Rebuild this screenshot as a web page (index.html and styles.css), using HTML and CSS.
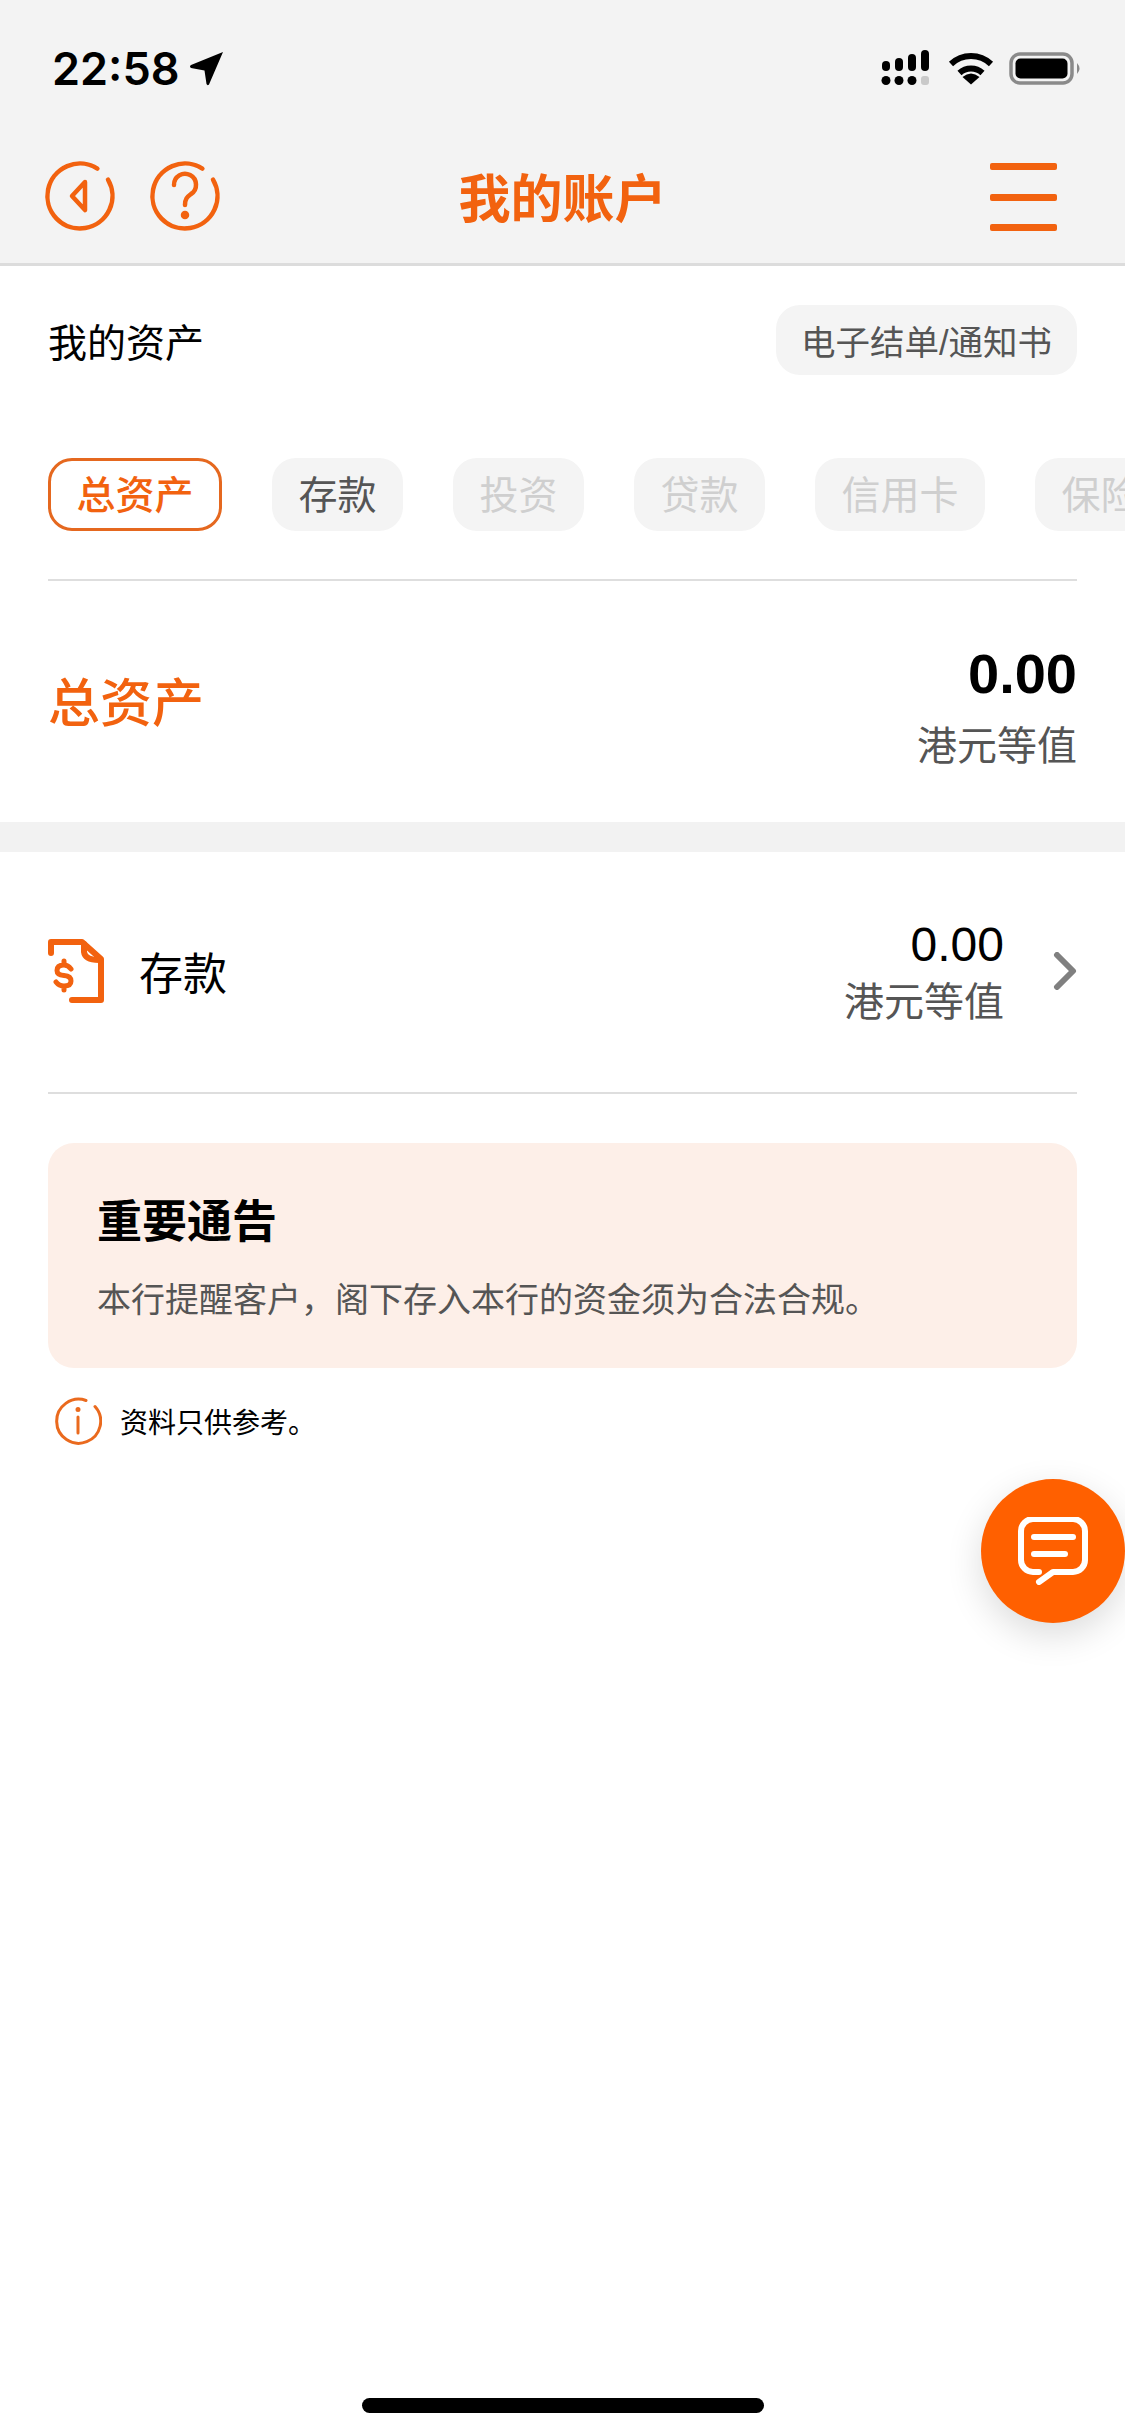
FILE: index.html
```html
<!DOCTYPE html>
<html lang="zh-CN">
<head>
  <meta charset="UTF-8" />
  <meta name="viewport" content="width=device-width, initial-scale=1" />
  <title>我的账户</title>
  <link rel="stylesheet" href="styles.css">
</head>
<body>
  <div class="page">
    <header class="top">
      <div class="status">
        <div class="status-left">
          <span class="time">22:58</span>
          <svg class="loc" viewBox="0 0 36 35"><path d="M34 1L20 33.500Q18.500 35 17.500 33L15.500 19.500L2 17Q0 15.500 2 14Z" /></svg>
        </div>
        <div class="status-right">
          <svg class="signal" viewBox="0 0 50 36">
            <rect x="1" y="11" width="8" height="10" rx="4" />
            <rect x="14" y="8" width="8" height="13" rx="4" />
            <rect x="27" y="4" width="8" height="17" rx="4" />
            <rect x="40" y="0" width="8" height="21" rx="4" />
            <circle cx="5" cy="30.500" r="4.500" />
            <circle cx="18" cy="30.500" r="4.500" />
            <circle cx="31" cy="30.500" r="4.500" />
            <rect class="signal-off" x="40" y="26" width="8" height="9" rx="3" />
          </svg>
          <svg class="wifi" viewBox="0 0 46 34">
            <path class="wifi-arc" d="M3 13A29 29 0 0 1 43 13" />
            <path class="wifi-arc" d="M11.500 22A17 17 0 0 1 34.500 22" />
            <path d="M23 33.500L14.500 26Q23 19 31.500 26Z" />
          </svg>
          <svg class="battery" viewBox="0 0 73 33">
            <rect class="battery-shell" x="2" y="2" width="61" height="29" rx="9" />
            <rect x="6.500" y="6.500" width="52" height="20" rx="5" />
            <path class="battery-nub" d="M68 11Q73 16.500 68 22Z" />
          </svg>
        </div>
      </div>
      <nav class="nav">
        <div class="nav-left">
          <svg class="round-icon" viewBox="0 0 72 72">
            <path d="M64 19.600A32.500 32.500 0 1 1 53.400 8.600" />
            <path d="M41 22L28 36L41 50Z" />
          </svg>
          <svg class="round-icon" viewBox="0 0 72 72">
            <path d="M64 19.600A32.500 32.500 0 1 1 53.400 8.600" />
            <path d="M25 25A11 11 0 1 1 42 34C38 37 36 39 36 45" />
            <circle class="dot" cx="36" cy="55" r="2" />
          </svg>
        </div>
        <h1 class="nav-title">我的账户</h1>
        <div class="burger"><span></span><span></span><span></span></div>
      </nav>
    </header>

    <section class="assets">
      <div class="assets-head">
        <span class="assets-label">我的资产</span>
        <span class="statement-btn">电子结单/通知书</span>
      </div>
      <div class="tabs">
        <span class="tab tab-active">总资产</span>
        <span class="tab">存款</span>
        <span class="tab tab-off">投资</span>
        <span class="tab tab-off">贷款</span>
        <span class="tab tab-off">信用卡</span>
        <span class="tab tab-off">保险</span>
      </div>
      <div class="total">
        <span class="total-label">总资产</span>
        <div class="total-value">
          <div class="total-num">0.00</div>
          <div class="unit">港元等值</div>
        </div>
      </div>
    </section>

    <div class="band"></div>

    <section class="list">
      <div class="row">
        <svg class="doc-icon" viewBox="0 0 58 66">
          <path d="M3 15V4H34L53 21V62H24" />
          <path d="M36 6V14Q37 22 51 22" />
          <path class="doc-dollar" d="M23 31Q20 27 16 27Q9 27 9 32.500Q9 37 16 37.500Q23 38 23 43Q23 48 16 48Q11 48 8 44M16 23V27M16 48V52" />
        </svg>
        <span class="row-label">存款</span>
        <div class="row-value">
          <div class="row-num">0.00</div>
          <div class="unit">港元等值</div>
        </div>
        <svg class="chevron" viewBox="0 0 24 38"><path d="M4 3L20 19L4 35" /></svg>
      </div>

      <div class="notice">
        <h2 class="notice-title">重要通告</h2>
        <p class="notice-text">本行提醒客户，阁下存入本行的资金须为合法合规。</p>
      </div>

      <div class="info">
        <svg class="info-icon" viewBox="0 0 48 48">
          <path d="M41 9.500A22 22 0 1 1 32 3.500" />
          <path d="M24 20V36" />
          <circle class="dot" cx="24" cy="12.500" r="1" />
        </svg>
        <span>资料只供参考。</span>
      </div>
    </section>

    <div class="fab">
      <svg class="fab-icon" viewBox="0 0 70 68">
        <path d="M21 55H15A12 12 0 0 1 3 43V14A12 12 0 0 1 15 2H55A12 12 0 0 1 67 14V43A12 12 0 0 1 55 55H35L21 65" />
        <path d="M16 20H55" />
        <path d="M16 37H47" />
      </svg>
    </div>

    <div class="home-bar"></div>
  </div>
</body>
</html>
```

FILE: styles.css
```css
* {
  box-sizing: border-box;
}
html, body {
  margin: 0;
  padding: 0;
  background-color: #fff;
}
body {
  font-family: "Liberation Sans", "Noto Sans CJK SC", sans-serif;
  color: #000;
}
.page {
  position: relative;
  width: 1125px;
  height: 2436px;
  display: flex;
  flex-direction: column;
  overflow: hidden;
}

/* top */
.top {
  background-color: #f3f3f3;
  border-bottom: 3px solid #dcdcdc;
}
.status {
  height: 133px;
  padding: 3px 43px 0 52px;
  display: flex;
  justify-content: space-between;
  align-items: center;
}
.status-left,
.status-right {
  display: flex;
  align-items: center;
}
.time {
  font-size: 45px;
  font-weight: 600;
  font-family: Inter, "Liberation Sans", sans-serif;
}
.loc {
  width: 36px;
  height: 35px;
  margin-left: 9px;
}
.signal {
  width: 50px;
  height: 36px;
  margin-right: 1px;
}
.signal-off {
  fill: #c9c9c9;
}
.wifi {
  width: 46px;
  height: 34px;
  margin-left: 16px;
}
.wifi-arc {
  fill: none;
  stroke: #000;
  stroke-width: 6;
}
.battery {
  width: 73px;
  height: 33px;
  margin-left: 15px;
}
.battery-shell {
  fill: none;
  stroke: #8a8a8a;
  stroke-width: 3.5;
}
.battery-nub {
  fill: #8a8a8a;
}
.nav {
  height: 130px;
  padding: 0 68px 4px 44px;
  display: grid;
  grid-template-columns: 1fr auto 1fr;
  align-items: center;
}
.nav-left {
  display: flex;
  gap: 33px;
}
.round-icon {
  width: 72px;
  height: 72px;
  fill: none;
  stroke: #f2620f;
  stroke-width: 4.5;
  stroke-linecap: round;
  stroke-linejoin: round;
}
.dot {
  fill: #f2620f;
}
.nav-title {
  margin: 8px 0 0 24px;
  font-size: 52px;
  font-weight: 700;
  color: #f2620f;
  line-height: 1;
}
.burger {
  justify-self: end;
  width: 67px;
  height: 68px;
  margin-top: 2px;
  display: flex;
  flex-direction: column;
  justify-content: space-between;
}
.burger span {
  display: block;
  height: 7px;
  border-radius: 2px;
  background-color: #f2620f;
}

/* assets */
.assets {
  padding: 0 48px;
}
.assets-head {
  display: flex;
  justify-content: space-between;
  align-items: center;
  padding-top: 39px;
}
.assets-label {
  font-size: 39px;
}
.statement-btn {
  display: flex;
  align-items: center;
  height: 70px;
  padding: 0 25px;
  font-size: 34.500px;
  color: #555;
  background-color: #f4f4f4;
  border-radius: 24px;
}
.tabs {
  display: flex;
  gap: 50px;
  margin-top: 83px;
  margin-right: -48px;
  overflow: hidden;
  padding-bottom: 48px;
}
.tab {
  flex: none;
  display: flex;
  align-items: center;
  height: 73px;
  padding: 0 26.500px 5px;
  font-size: 39px;
  color: #555;
  background-color: #f4f4f4;
  border-radius: 24px;
}
.tab-active {
  color: #f2620f;
  background-color: #fff;
  border: 3px solid #e5681f;
  padding: 0 25.500px 5px;
  font-weight: 500;
}
.tab-off {
  color: #cfcfcf;
}
.total {
  display: flex;
  justify-content: space-between;
  align-items: center;
  height: 243px;
  border-top: 2px solid #dedede;
}
.total-label {
  padding-bottom: 4px;
  font-size: 52px;
  font-weight: 500;
  color: #f2620f;
}
.total-value {
  text-align: right;
  padding-top: 11px;
}
.total-num {
  font-size: 56px;
  font-weight: 700;
  line-height: 62px;
}
.unit {
  font-size: 40px;
  color: #555;
  line-height: 52px;
}
.total-value .unit {
  margin-top: 15px;
}
.band {
  height: 30px;
  background-color: #f2f2f2;
}

/* list */
.list {
  padding: 0 48px;
}
.row {
  display: flex;
  align-items: center;
  height: 242px;
  padding-bottom: 3px;
  border-bottom: 2px solid #dedede;
}
.doc-icon {
  width: 58px;
  height: 66px;
  fill: none;
  stroke: #f2620f;
  stroke-width: 6;
  stroke-linejoin: round;
  stroke-linecap: round;
}
.doc-dollar {
  stroke-width: 5;
}
.row-label {
  margin-left: 33px;
  font-size: 44px;
}
.row-value {
  margin-left: auto;
  text-align: right;
  padding-top: 3px;
}
.row-num {
  font-size: 48px;
  line-height: 56px;
}
.row-value .unit {
  margin-top: 3px;
}
.chevron {
  width: 24px;
  height: 38px;
  margin-left: 49px;
  fill: none;
  stroke: #808080;
  stroke-width: 6;
  stroke-linecap: round;
  stroke-linejoin: round;
}
.notice {
  margin-top: 49px;
  height: 225px;
  padding: 51px 49px 0;
  background-color: #fdefe8;
  border-radius: 26px;
}
.notice-title {
  margin: 0;
  font-size: 45px;
  font-weight: 700;
  line-height: 58px;
}
.notice-text {
  margin: 24px 0 0;
  font-size: 34px;
  line-height: 48px;
  color: #555;
}
.info {
  display: flex;
  align-items: center;
  margin-top: 29px;
  padding-left: 6px;
  font-size: 28px;
}
.info-icon {
  width: 48px;
  height: 48px;
  margin-right: 18px;
  fill: none;
  stroke: #ea6a1e;
  stroke-width: 3;
  stroke-linecap: round;
}

/* floating button + home bar */
.fab {
  position: absolute;
  left: 981px;
  top: 1479px;
  width: 144px;
  height: 144px;
  border-radius: 50%;
  background-color: #ff6000;
  box-shadow: 0 12px 36px rgba(0, 0, 0, 0.14);
  display: flex;
  align-items: center;
  justify-content: center;
}
.fab-icon {
  width: 70px;
  height: 68px;
  fill: none;
  stroke: #fff;
  stroke-width: 6;
  stroke-linecap: round;
  stroke-linejoin: round;
}
.home-bar {
  width: 402px;
  height: 15px;
  margin: auto auto 23px;
  border-radius: 8px;
  background-color: #000;
}
```
